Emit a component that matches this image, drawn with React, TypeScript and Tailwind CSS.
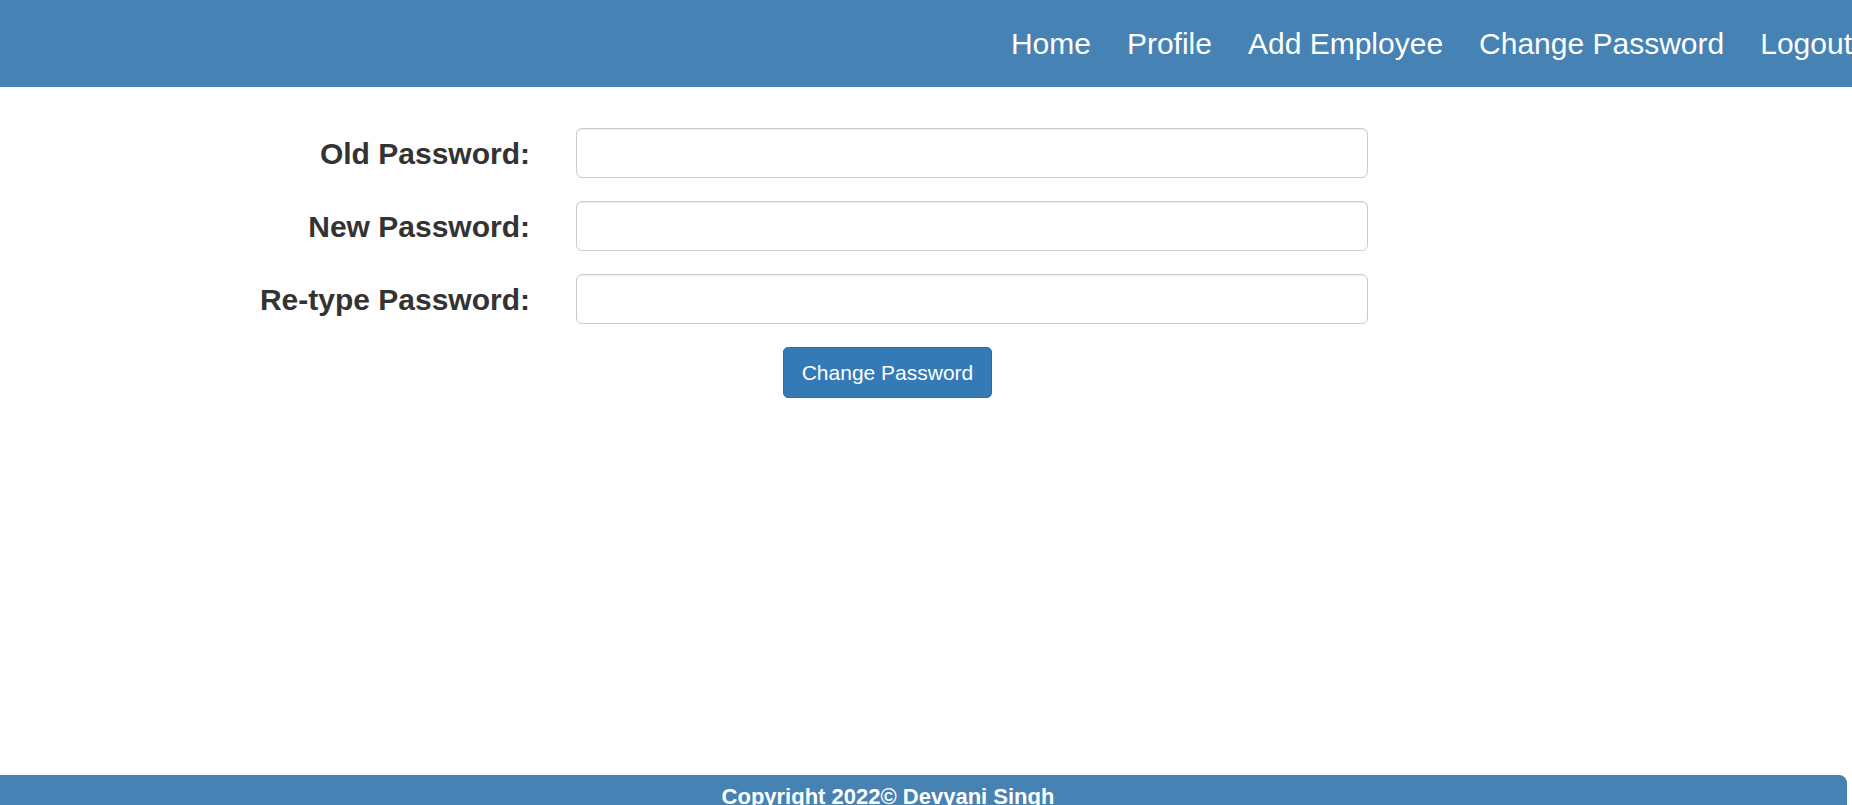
import React from 'react';

const navItems = ['Home', 'Profile', 'Add Employee', 'Change Password', 'Logout'];

const fields = ['Old Password:', 'New Password:', 'Re-type Password:'];

const App: React.FC = () => {
  return (
    <div className="h-screen overflow-hidden bg-white font-['Liberation_Sans',Arial,sans-serif]">
      {/* Top bar */}
      <header className="h-[87px] bg-[#4682b4] flex items-center justify-end gap-[36px] pr-0">
        {navItems.map((item) => (
          <a key={item} href="#" className="text-[30px] leading-none text-white whitespace-nowrap">
            {item}
          </a>
        ))}
      </header>

      {/* Change password form */}
      <main className="h-[688px] pt-[41px]">
        <form className="flex flex-col gap-[23px]" onSubmit={(e) => e.preventDefault()}>
          {fields.map((label) => (
            <div key={label} className="flex items-center">
              <label className="w-[530px] text-right text-[30px] font-bold text-[#333] whitespace-nowrap">
                {label}
              </label>
              <input
                type="password"
                className="ml-[46px] w-[792px] h-[50px] rounded-[6px] border border-[#ccc] bg-white px-3 shadow-[inset_0_1px_1px_rgba(0,0,0,0.075)] outline-none"
              />
            </div>
          ))}
          <div className="pl-[783px]">
            <button
              type="submit"
              className="h-[51px] w-[209px] rounded-[5px] border border-[#2e6da4] bg-[#337ab7] text-[21px] text-white"
            >
              Change Password
            </button>
          </div>
        </form>
      </main>

      {/* Footer */}
      <footer className="h-[50px] w-[1847px] rounded-tr-[8px] bg-[#4682b4] pt-[5px] pr-[71px] text-center text-[22px] font-bold text-white">
        Copyright 2022© Devyani Singh
      </footer>
    </div>
  );
};

export default App;
